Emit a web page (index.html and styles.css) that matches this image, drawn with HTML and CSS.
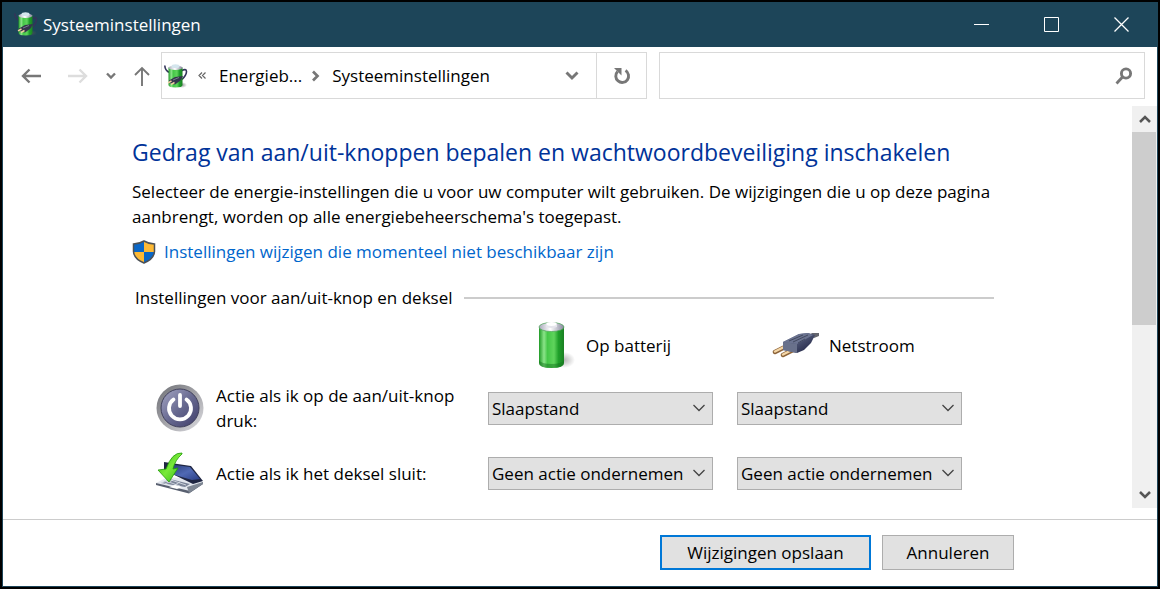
FILE: index.html
```html
<!DOCTYPE html>
<html lang="nl">
<head>
<meta charset="utf-8">
<meta name="viewport" content="width=device-width, initial-scale=1">
<title>Systeeminstellingen</title>
<link rel="stylesheet" href="styles.css">
</head>
<body>
<svg class="defs" aria-hidden="true">
  <defs>
    <linearGradient id="green" x1="0" x2="1" y1="0" y2="0">
      <stop offset="0" stop-color="#1f9a25"/><stop offset=".2" stop-color="#8be489"/><stop offset=".34" stop-color="#45c748"/><stop offset=".6" stop-color="#5fd45c"/><stop offset=".78" stop-color="#1fa02a"/><stop offset="1" stop-color="#1b8023"/>
    </linearGradient>
    <linearGradient id="cap" x1="0" x2="1" y1="0" y2="0">
      <stop offset="0" stop-color="#a9a9bb"/><stop offset=".45" stop-color="#ffffff"/><stop offset="1" stop-color="#85859c"/>
    </linearGradient>
    <linearGradient id="plug" x1="0" x2="1" y1="0" y2="1">
      <stop offset="0" stop-color="#8088a0"/><stop offset=".5" stop-color="#484f6e"/><stop offset="1" stop-color="#171a3a"/>
    </linearGradient>
    <linearGradient id="ring" x1="0" x2="1" y1="0" y2="1">
      <stop offset="0" stop-color="#6d6f74"/><stop offset=".5" stop-color="#a3a3a8"/><stop offset="1" stop-color="#dedee2"/>
    </linearGradient>
    <linearGradient id="disc" x1="0" x2="1" y1="0" y2="1">
      <stop offset="0" stop-color="#a6a7c4"/><stop offset=".5" stop-color="#686a91"/><stop offset="1" stop-color="#3f3d69"/>
    </linearGradient>
    <linearGradient id="lid" x1="0" x2="1" y1="0" y2="1">
      <stop offset="0" stop-color="#23366f"/><stop offset=".55" stop-color="#5069b4"/><stop offset="1" stop-color="#293e86"/>
    </linearGradient>
    <linearGradient id="arrow" x1="0" x2="1" y1="0" y2="1">
      <stop offset="0" stop-color="#35b90f"/><stop offset=".5" stop-color="#79e93a"/><stop offset="1" stop-color="#2eb512"/>
    </linearGradient>
    <radialGradient id="shade"><stop offset="0" stop-color="#555" stop-opacity=".6"/><stop offset="1" stop-color="#555" stop-opacity="0"/></radialGradient>
    <symbol id="power-plan" viewBox="0 0 24 24">
      <ellipse cx="18" cy="21" rx="5" ry="3" fill="url(#shade)"/>
      <path d="M.8 1.500q.2 5.500 5 7M17 7q5.500-3 5.500.500t-4.500 8" fill="none" stroke="#34345a" stroke-width="1.600"/>
      <path d="M4.500 3.500v17.500q0 2.500 7 2.500t7-2.500V3.500z" fill="url(#green)"/>
      <ellipse cx="11.500" cy="3.700" rx="7" ry="2.200" fill="url(#cap)"/>
      <ellipse cx="11.500" cy="2.200" rx="4" ry="1.900" fill="#d4e5ed"/>
      <path d="M5 16.500l6-3.500 8-1-2.500 4.500-5.500 4-6-1.500z" fill="#33354b"/>
      <path d="M7.500 17L4 18.800M10.500 18.500L7 20.300" stroke="#f2d0a0" stroke-width="1.500"/>
      <path d="M9 16l6-2.500" stroke="#777c8c"/>
    </symbol>
  </defs>
</svg>
<div class="window">
  <header class="titlebar">
    <svg class="app-icon" width="24" height="24"><use href="#power-plan"/></svg>
    <span class="title">Systeeminstellingen</span>
    <button class="caption" aria-label="Minimaliseren"><svg width="16" height="16"><path d="M0 8.500h15" stroke="#fff"/></svg></button>
    <button class="caption" aria-label="Maximaliseren"><svg width="16" height="16"><path d="M.5 1.500h14v14H.5z" fill="none" stroke="#fff"/></svg></button>
    <button class="caption" aria-label="Sluiten"><svg width="16" height="16"><path d="M.5 1.500l14 14m0-14l-14 14" stroke="#fff" stroke-width="1.300"/></svg></button>
  </header>

  <nav class="toolbar" aria-label="Navigatie">
    <button class="nav back" aria-label="Terug"><svg width="20" height="16"><path d="M20 8H2M8.500 1.500L2 8l6.500 6.500" fill="none" stroke="#777" stroke-width="2.400"/></svg></button>
    <button class="nav forward" aria-label="Vooruit" disabled><svg width="20" height="16"><path d="M0 8h18M11.500 1.500L18 8l-6.500 6.500" fill="none" stroke="#ddd" stroke-width="2.400"/></svg></button>
    <button class="nav recent" aria-label="Recente locaties"><svg width="10" height="8"><path d="M1 1.500l4 4 4-4" fill="none" stroke="#777" stroke-width="2.400"/></svg></button>
    <button class="nav up" aria-label="Omhoog"><svg width="16" height="20"><path d="M8 20V2M1 9l7-7 7 7" fill="none" stroke="#777" stroke-width="1.900"/></svg></button>
    <div class="address">
      <svg class="place-icon" width="24" height="24"><use href="#power-plan"/></svg>
      <svg class="more" width="8" height="8"><path d="M4 .5L1 3.500l3 3M7.500 .5l-3 3 3 3" fill="none" stroke="#666" stroke-width="1.200"/></svg>
      <a class="crumb" href="#">Energieb...</a>
      <svg class="sep" width="8" height="12"><path d="M1 1.500L5.500 6 1 10.500" fill="none" stroke="#777" stroke-width="2.700"/></svg>
      <a class="crumb" href="#">Systeeminstellingen</a>
      <button class="drop" aria-label="Vorige locaties"><svg width="14" height="10"><path d="M1.500 1.500L7 7l5.500-5.500" fill="none" stroke="#777" stroke-width="2.900"/></svg></button>
      <button class="refresh" aria-label="Vernieuwen"><svg width="18" height="18"><path d="M12.500 3.600A6.400 6.400 0 1 1 4.600 4.600" fill="none" stroke="#777" stroke-width="2.900"/><path d="M1 1h7.500v7.500z" fill="#777"/></svg></button>
    </div>
    <label class="search">
      <input type="search" aria-label="Zoeken">
      <svg width="18" height="18"><circle cx="11" cy="6.500" r="4.600" fill="none" stroke="#777" stroke-width="2.900"/><path d="M7.500 10L1.500 16.500" stroke="#777" stroke-width="2.800"/></svg>
    </label>
  </nav>

  <div class="view">
    <main class="content">
      <h1>Gedrag van aan/uit-knoppen bepalen en wachtwoordbeveiliging inschakelen</h1>
      <p class="intro">Selecteer de energie-instellingen die u voor uw computer wilt gebruiken. De wijzigingen die u op deze pagina aanbrengt, worden op alle energiebeheerschema's toegepast.</p>
      <a class="admin" href="#">
        <svg width="24" height="24" viewBox="0 0 24 24"><path d="M12 1Q7 4 1.500 4v8Q2 18 12 23z" fill="#0a67c7"/><path d="M12 1q5 3 10.500 3v8Q22 18 12 23z" fill="#fdb934"/><path d="M12 12H1.500Q2.500 19 12 23z" fill="#fdb934"/><path d="M12 12h10.500Q21.500 19 12 23z" fill="#0a67c7"/><path d="M12 1Q7 4 1.500 4v7.500Q2 19 12 23 22 19 22.500 11.500V4Q17 4 12 1z" fill="none" stroke="#4c5156" stroke-width="1.500"/></svg>
        <span>Instellingen wijzigen die momenteel niet beschikbaar zijn</span>
      </a>
      <section>
        <h2>Instellingen voor aan/uit-knop en deksel</h2>
        <div class="settings">
          <div class="source battery">
            <svg width="40" height="48" viewBox="0 0 40 48"><ellipse cx="26" cy="39" rx="11" ry="8" fill="url(#shade)" opacity=".7"/><path d="M1 6v36q0 5 12.500 5T26 42V6z" fill="url(#green)"/><path d="M1 39v3q0 5 12.500 5T26 42v-3q-2 4-12.500 4T1 39z" fill="#167620" opacity=".5"/><ellipse cx="13.500" cy="6" rx="12.500" ry="4.500" fill="url(#cap)" stroke="#4aa454" stroke-width=".7"/><path d="M8 4q0-3 5.500-3T19 4v2q-5 2-11 0z" fill="#e5e5ec"/><ellipse cx="13.500" cy="3" rx="5" ry="1.900" fill="#fff"/></svg>
            <span>Op batterij</span>
          </div>
          <div class="source mains">
            <svg width="48" height="28" viewBox="0 0 48 28"><path d="M15 15L3 21M21 19l-10 5" stroke="#8c6339" stroke-width="4.500" stroke-linecap="round"/><path d="M15 14.500L3 20.500M21 18.500l-10 5" stroke="#f4d6a6" stroke-width="2.500" stroke-linecap="round"/><path d="M36 5l4-3 7 0v3l-5 2z" fill="#65666e"/><path d="M11 11l16-8 9-1 7 2-4 8-7 7-7 3-14-3z" fill="url(#plug)"/><path d="M11 11l14 2v9l-14-3z" fill="#69718b"/><path d="M11 11l16-8 9-1 5 2-16 9z" fill="#6b7390"/><path d="M17 10l14-6M21 11l15-7M26 12l7-4" stroke="#42495f"/></svg>
            <span>Netstroom</span>
          </div>

          <div class="action">
            <svg width="48" height="48" viewBox="0 0 48 48"><circle cx="24" cy="24" r="23.500" fill="url(#ring)"/><circle cx="24" cy="24" r="19" fill="url(#disc)" stroke="#40405b"/><path d="M17.500 15.500a11 11 0 1 0 13 0M24 11v11" fill="none" stroke="#fff" stroke-width="3.800" stroke-linecap="round"/></svg>
            <span>Actie als ik op de aan/uit-knop druk:</span>
          </div>
          <div class="select"><select aria-label="Aan/uit-knop, op batterij"><option>Slaapstand</option></select><svg width="12" height="8"><path d="M.5 1L6 6.500 11.500 1" fill="none" stroke="#444" stroke-width="1.300"/></svg></div>
          <div class="select"><select aria-label="Aan/uit-knop, netstroom"><option>Slaapstand</option></select><svg width="12" height="8"><path d="M.5 1L6 6.500 11.500 1" fill="none" stroke="#444" stroke-width="1.300"/></svg></div>

          <div class="action">
            <svg width="48" height="42" viewBox="0 0 48 42"><path d="M0 31L12 25l34 3v3L34 40z" fill="#e3e7ee"/><path d="M0 31l34 8 13-9v2L33 41.500 0 33z" fill="#596070"/><path d="M5 31l9-4 20 5-5 3z" fill="#7b8498"/><path d="M5 31l10-3 15 5M10 29l14 5M17 28l-8 4M24 30l-7 4" fill="none" stroke="#dde2ea" stroke-width=".8"/><path d="M13 35l6-2 7 2-5 2z" fill="#fff"/><path d="M8 10l27 4 12 15-10 3L8 18z" fill="#1f2642"/><path d="M12 12l22 3 10 12-8 1-24-7z" fill="url(#lid)"/><path d="M31 35l16-5v2L33 41z" fill="#7e8693"/><path d="M26 1Q16 0 10 17L2 18l11 12 9-14-5 1Q19 8 26 2z" fill="url(#arrow)" stroke="#229b0a" stroke-width=".8"/></svg>
            <span>Actie als ik het deksel sluit:</span>
          </div>
          <div class="select"><select aria-label="Deksel, op batterij"><option>Geen actie ondernemen</option></select><svg width="12" height="8"><path d="M.5 1L6 6.500 11.500 1" fill="none" stroke="#444" stroke-width="1.300"/></svg></div>
          <div class="select"><select aria-label="Deksel, netstroom"><option>Geen actie ondernemen</option></select><svg width="12" height="8"><path d="M.5 1L6 6.500 11.500 1" fill="none" stroke="#444" stroke-width="1.300"/></svg></div>
        </div>
      </section>
    </main>
    <div class="scrollbar">
      <button aria-label="Omhoog schuiven"><svg width="12" height="10"><path d="M1 8l5-5 5 5" fill="none" stroke="#555" stroke-width="2.500"/></svg></button>
      <div class="track"><div class="thumb"></div></div>
      <button aria-label="Omlaag schuiven"><svg width="12" height="10"><path d="M1 2l5 5 5-5" fill="none" stroke="#555" stroke-width="2.500"/></svg></button>
    </div>
  </div>

  <footer class="footer">
    <button class="btn primary">Wijzigingen opslaan</button>
    <button class="btn">Annuleren</button>
  </footer>
</div>
</body>
</html>
```
FILE: styles.css
```css
* { box-sizing: border-box; }

body {
  margin: 0;
  padding: 2px;
  background: #000;
  color: #000;
  font: 17px/25px "Open Sans", "Noto Sans", sans-serif;
}

button, select, input { font: inherit; color: inherit; }
button { border: 0; padding: 0; background: none; display: grid; place-items: center; }
a { text-decoration: none; color: inherit; }
svg { display: block; flex: none; }
.defs { position: absolute; width: 0; height: 0; }

.window {
  display: flex;
  flex-direction: column;
  min-height: calc(100vh - 4px);
  background: #fff;
  border: 1px solid #1d4559;
}

.titlebar {
  display: flex;
  height: 44px;
  align-items: center;
  padding-bottom: 2px;
  background: #1d4559;
  color: #fff;
}
.app-icon { margin-left: 11px; }
.title { flex: 1; margin-left: 5px; }
.caption { width: 70px; height: 42px; }

.toolbar {
  display: flex;
  align-items: center;
  padding: 5px 12px 7px 0;
}
.back { margin-left: 18px; }
.forward { margin-left: 27px; }
.recent { margin-left: 18px; }
.up { margin-left: 18px; }
.address {
  display: flex;
  align-items: center;
  width: 486px;
  height: 47px;
  margin-left: 11px;
  border: 1px solid #d9d9d9;
}
.place-icon { margin-left: 2px; }
.more { margin-left: 10px; }
.crumb { margin-left: 13px; }
.sep { margin-left: 10px; }
.sep + .crumb { margin-left: 12px; }
.drop { width: 48px; height: 45px; margin-left: auto; }
.refresh { width: 50px; height: 45px; border-left: 1px solid #d9d9d9; }
.search {
  display: flex;
  flex: 1;
  align-items: center;
  height: 47px;
  margin-left: 12px;
  padding-right: 11px;
  border: 1px solid #d9d9d9;
}
.search input { flex: 1; min-width: 0; border: 0; outline: 0; background: none; }

.view { display: flex; flex: 1; }
.content { flex: 1; max-width: 991px; padding: 31px 0 5px 129px; }
h1 { margin: 0; font-size: 23px; line-height: 30px; font-weight: 400; color: #003399; white-space: nowrap; }
.intro { margin: 12px 0 0; }
.admin { display: flex; align-items: center; gap: 8px; margin-top: 10px; color: #0066cc; }
h2 {
  display: flex;
  align-items: center;
  gap: 11px;
  margin: 21px 0 0 3px;
  font-size: 17px;
  line-height: 25px;
  font-weight: 400;
}
h2::after { content: ""; flex: 1; height: 2px; background: #ccc; }

.settings {
  display: grid;
  grid-template-columns: 308px 225px 225px;
  column-gap: 24px;
  align-items: center;
  margin: 11px 0 0 24px;
}
.source { display: flex; align-items: center; height: 48px; margin-bottom: 14px; }
.battery { grid-column: 2; margin-left: 50px; gap: 8px; }
.mains { margin-left: 35px; gap: 9px; }
.action { display: flex; align-items: center; gap: 12px; min-height: 50px; margin-bottom: 15px; }
.select { display: grid; align-items: center; margin-bottom: 15px; }
.select > * { grid-area: 1 / 1; }
.select svg { justify-self: end; margin-right: 8px; pointer-events: none; }
.select select {
  appearance: none;
  width: 100%;
  height: 33px;
  padding: 0 3px;
  border: 1px solid #adadad;
  border-radius: 0;
  background: #e1e1e1;
}

.scrollbar { display: flex; flex-direction: column; width: 25px; margin: 0 0 11px auto; background: #f0f0f0; }
.scrollbar button { height: 26px; }
.track { flex: 1; }
.thumb { width: 24px; height: 55%; background: #cdcdcd; }

.footer {
  display: flex;
  justify-content: flex-end;
  gap: 11px;
  padding: 15px 143px 16px 0;
  border-top: 1px solid #ccc;
}
.btn { width: 132px; height: 35px; border: 1px solid #adadad; background: #e1e1e1; }
.primary { width: 211px; border: 2px solid #0078d7; }
```
